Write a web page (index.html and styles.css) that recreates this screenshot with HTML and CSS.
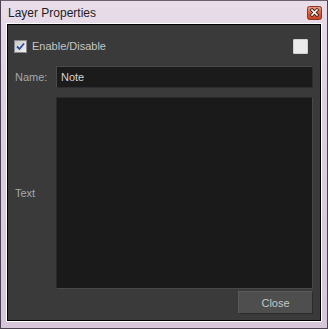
FILE: index.html
```html
<!DOCTYPE html>
<html lang="en">
<head>
  <meta charset="UTF-8">
  <title>Layer Properties</title>
  <link rel="stylesheet" href="styles.css">
</head>
<body>
  <div class="window">
    <div class="titlebar">
      <span class="title">Layer Properties</span>
      <button class="x-btn" aria-label="Close">
        <svg width="15" height="14" viewBox="0 0 15 14">
          <defs>
            <linearGradient id="red" x1="0" y1="0" x2="0" y2="1">
              <stop offset="0" stop-color="#eba08a"/>
              <stop offset="0.5" stop-color="#d9603f"/>
              <stop offset="1" stop-color="#c9401f"/>
            </linearGradient>
          </defs>
          <rect x="0.5" y="0.5" width="14" height="13" rx="2" fill="url(#red)" stroke="#8d3422"/>
          <path d="M5 4 L10 9 M10 4 L5 9" stroke="#3a1a12" stroke-width="3.2" stroke-linecap="square"/>
          <path d="M5 4 L10 9 M10 4 L5 9" stroke="#fff" stroke-width="1.6" stroke-linecap="square"/>
        </svg>
      </button>
    </div>

    <div class="client">
      <div class="top-row">
        <label class="check">
          <span class="box">
            <svg width="9" height="9" viewBox="0 0 9 9">
              <path d="M1 4.5 L3.5 7 L8 1.5" fill="none" stroke="#2b4f9e" stroke-width="1.8"/>
            </svg>
          </span>
          Enable/Disable
        </label>
        <span class="swatch"></span>
      </div>

      <div class="field name-row">
        <span class="lbl">Name:</span>
        <div class="input">Note</div>
      </div>

      <div class="field text-row">
        <span class="lbl">Text</span>
        <div class="textarea"></div>
      </div>

      <div class="footer">
        <button class="close-btn">Close</button>
      </div>
    </div>
  </div>
</body>
</html>
```

FILE: styles.css
```css
body {
  margin: 0;
  font-family: "Liberation Sans", Arial, sans-serif;
}
.window {
  width: 328px;
  height: 329px;
  box-sizing: border-box;
  border: 1px solid #4a4050;
  border-top-color: #6a6070;
  padding: 0 5px 6px 5px;
  background: linear-gradient(180deg, #e8dde9 0%, #ddd0e0 30%, #d6c6da 100%);
  display: flex;
  flex-direction: column;
}
.titlebar {
  height: 22px;
  display: flex;
  align-items: center;
  justify-content: space-between;
}
.title {
  font-size: 12px;
  color: #1e1e1e;
  margin-left: 2px;
  margin-top: 1px;
}
.x-btn {
  border: none;
  background: none;
  padding: 0;
  margin: 2px 0 0 0;
  width: 15px;
  height: 14px;
  display: block;
}
.x-btn svg {
  display: block;
}
.client {
  flex: 1;
  border: 1px solid #fff;
  box-shadow: inset 0 0 0 1px #000;
  background: #3a3a3a;
  padding: 15px 8px 7px 8px;
  display: flex;
  flex-direction: column;
  font-size: 11px;
}
.top-row {
  height: 14px;
  display: flex;
  align-items: center;
  justify-content: space-between;
}
.check {
  display: flex;
  align-items: center;
  gap: 5px;
  color: #c4c4c4;
  margin-left: -1px;
}
.box {
  width: 11px;
  height: 11px;
  border: 1px solid #8a8a8a;
  background: linear-gradient(135deg, #c8c8c8, #f2f2f2);
  display: flex;
  align-items: center;
  justify-content: center;
}
.swatch {
  width: 13px;
  height: 13px;
  background: #ebebeb;
  border: 1px solid #d0d0d0;
  border-radius: 1px;
  margin-right: 5px;
}
.field {
  display: flex;
  align-items: center;
}
.lbl {
  width: 41px;
  color: #a3a9ae;
}
.name-row {
  margin-top: 13px;
}
.input {
  flex: 1;
  height: 20px;
  background: #1b1b1b;
  border: 1px solid #4a4a4a;
  border-right-color: #2e2e2e;
  border-bottom-color: #2e2e2e;
  color: #d2d2d2;
  line-height: 20px;
  padding-left: 4px;
  font-size: 11px;
}
.text-row {
  margin-top: 9px;
}
.textarea {
  flex: 1;
  height: 190px;
  background: #1a1a1a;
  border: 1px solid #2a2a2a;
  border-bottom-color: #484848;
  border-right-color: #484848;
}
.footer {
  margin-top: 2px;
  display: flex;
  justify-content: flex-end;
}
.close-btn {
  width: 75px;
  height: 23px;
  background: #4e4e4e;
  border: 1px solid #2a2a2a;
  border-top-color: #5c5c5c;
  border-left-color: #5a5a5a;
  color: #c6c6c6;
  font-family: "Liberation Sans", Arial, sans-serif;
  font-size: 11px;
  padding: 0;
}
```
